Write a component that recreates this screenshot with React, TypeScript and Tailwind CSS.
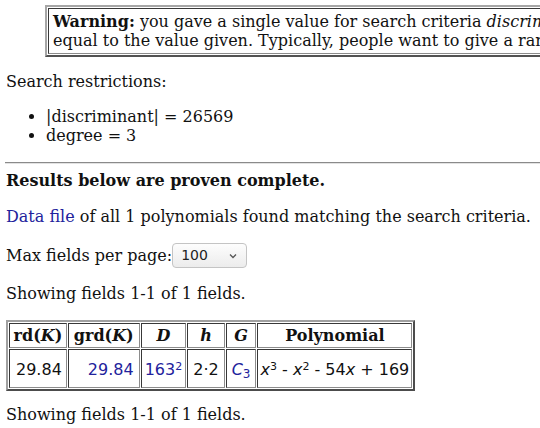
import React from 'react';

const serif = "font-['DejaVu_Serif','Liberation_Serif',serif]";
const sans = "font-['DejaVu_Sans','Liberation_Sans',sans-serif]";

const Link = ({ children }: { children: React.ReactNode }) => (
  <a className="text-[#22229c] no-underline">{children}</a>
);

const App = () => {
  const th =
    'border border-[#8c8c8c] [border-style:inset] px-[3px] py-[2px] text-center font-bold';
  const td = `border border-[#8c8c8c] [border-style:inset] pt-[10px] pb-[8px] ${sans}`;

  return (
    <div className={`w-[540px] h-[428px] overflow-hidden bg-white text-[16px] leading-[19px] text-[#111] ${serif}`}>
      <div className="pl-[6px] w-[1000px]">
        {/* warning box */}
        <table className="mt-[5px] ml-[39px] border-2 border-[#a6a6a6] [border-style:outset] border-separate border-spacing-[1px]">
          <tbody>
            <tr>
              <td className="border border-[#8c8c8c] [border-style:inset] px-[4px] py-[3px] whitespace-nowrap">
                <b>Warning:</b> you gave a single value for search criteria <i>discriminant</i>, so only fields with discriminant exactly
                <br />
                equal to the value given. Typically, people want to give a range of values instead.
              </td>
            </tr>
          </tbody>
        </table>

        <p className="mt-[15px]">Search restrictions:</p>
        <ul className="mt-[16px] ml-[29px] list-disc list-outside pl-[11px]">
          <li>|discriminant| = 26569</li>
          <li>degree = 3</li>
        </ul>

        <div className="mt-[17px] w-[540px] -ml-[1px] border-t border-[#8a8a8a] border-b border-b-[#e2e2e2]" />

        <p className="mt-[7px] font-bold">Results below are proven complete.</p>

        <p className="mt-[17px]">
          <Link>Data file</Link> of all 1 polynomials found matching the search criteria.
        </p>

        <div className="mt-[17px] flex items-center h-[25px]">
          <span>Max fields per page:</span>
          <div className={`w-[75px] h-[25px] flex items-center justify-between pl-[8px] pr-[9px] rounded-[4px] border border-[#c4c4c4] bg-gradient-to-b from-[#fdfdfd] to-[#ececec] text-[14px] text-[#222] ${sans}`}>
            <span>100</span>
            <svg width="8" height="6" viewBox="0 0 8 6" className="mt-[1px]">
              <path d="M1 1.5 L4 4.5 L7 1.5" fill="none" stroke="#555" strokeWidth="1.3" />
            </svg>
          </div>
        </div>

        <p className="mt-[16px]">Showing fields 1-1 of 1 fields.</p>

        <table className="mt-[17px] border-2 border-[#a0a0a0] [border-style:outset] border-separate border-spacing-[1px]">
          <thead>
            <tr>
              <th className={th}>
                rd(<i>K</i>)
              </th>
              <th className={`${th} px-[5px]`}>
                grd(<i>K</i>)
              </th>
              <th className={th}>
                <i>D</i>
              </th>
              <th className={th}>
                <i>h</i>
              </th>
              <th className={th}>
                <i>G</i>
              </th>
              <th className={th}>Polynomial</th>
            </tr>
          </thead>
          <tbody>
            <tr>
              <td className={`${td} pl-[6px] pr-[4px]`}>29.84</td>
              <td className={`${td} px-[5px] text-right`}>
                <Link>29.84</Link>
              </td>
              <td className={`${td} px-[3px]`}>
                <Link>
                  163<sup className="text-[11px]">2</sup>
                </Link>
              </td>
              <td className={`${td} px-[5px]`}>2·2</td>
              <td className={`${td} px-[5px]`}>
                <Link>
                  <i>C</i>
                  <sub className="text-[12px]">3</sub>
                </Link>
              </td>
              <td className={`${td} px-[2px]`}>
                <i>x</i>
                <sup className="text-[11px]">3</sup> - <i>x</i>
                <sup className="text-[11px]">2</sup> - 54<i>x</i> + 169
              </td>
            </tr>
          </tbody>
        </table>

        <p className="mt-[14px]">Showing fields 1-1 of 1 fields.</p>
      </div>
    </div>
  );
};

export default App;
